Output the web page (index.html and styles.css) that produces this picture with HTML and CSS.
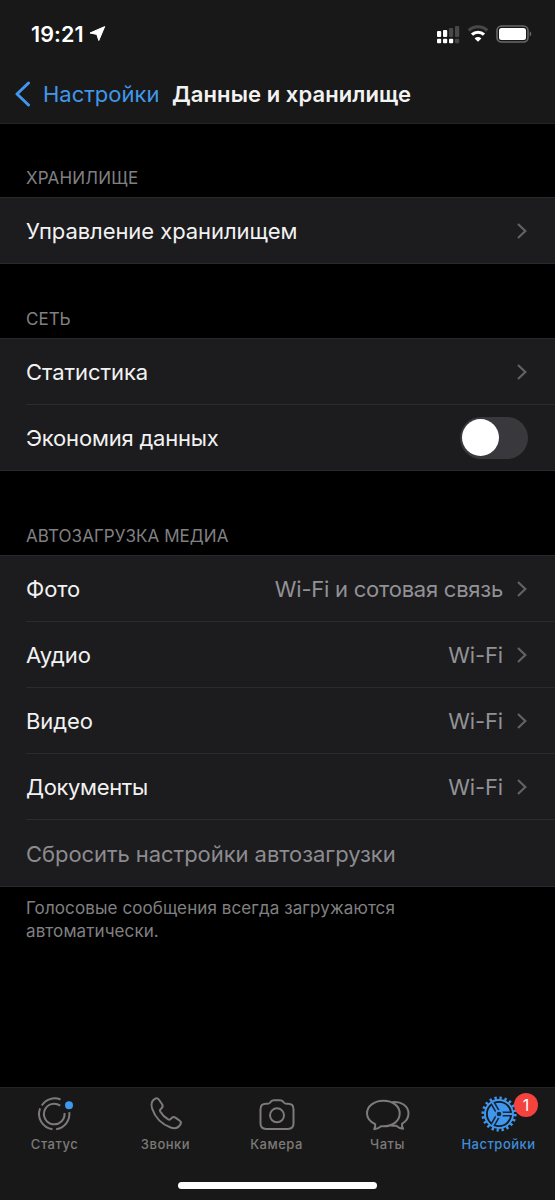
FILE: index.html
```html
<!DOCTYPE html>
<html lang="ru">
<head>
<meta charset="utf-8">
<title>Данные и хранилище</title>
<link rel="stylesheet" href="styles.css">
</head>
<body>
<div class="screen">
  <header class="header">
    <div class="status-bar">
      <div class="clock"><span class="time">19:21</span>
        <svg width="17" height="16" viewBox="0 0 17 16"><path d="M15.700.6 9.800 14.500 7.800 8.400 1 7Z" fill="#fff" stroke="#fff" stroke-width="1" stroke-linejoin="round"/></svg>
      </div>
      <div class="indicators">
        <svg width="24" height="20" viewBox="0 0 24 20">
          <g fill="#fff"><rect x="1" y="7" width="4.2" height="6" rx="1"/><rect x="7" y="6" width="4.2" height="7" rx="1"/><rect x="1" y="14.7" width="4.2" height="4.5" rx="1"/><rect x="7" y="14.7" width="4.2" height="4.5" rx="1"/><rect x="13" y="14.7" width="4.2" height="4.5" rx="1"/></g>
          <g fill="#48484a"><rect x="13" y="4" width="4.2" height="9" rx="1"/><rect x="19" y="2" width="4.2" height="11" rx="1"/><rect x="19" y="14.7" width="4.2" height="4.5" rx="1"/></g>
        </svg>
        <svg width="22" height="17" viewBox="0 0 22 17" fill="none" stroke-width="3.2">
          <path d="M1.800 5.500a13.200 13.200 0 0 1 18.400 0" stroke="#48484a"/>
          <path d="M5 9.700a8.600 8.600 0 0 1 12 0" stroke="#fff"/>
          <path d="M11 16.800 7.600 13.400a4.800 4.800 0 0 1 6.800 0Z" fill="#fff"/>
        </svg>
        <svg width="36" height="18" viewBox="0 0 36 18">
          <rect x="1" y="1" width="31" height="16" rx="4.5" fill="none" stroke="#68686a" stroke-width="1.6"/>
          <rect x="3" y="3" width="27" height="12" rx="2.5" fill="#fff"/>
          <path d="M33.7 6.6c2.1.5 2.1 4.3 0 4.8Z" fill="#68686a"/>
        </svg>
      </div>
    </div>
    <nav class="nav-bar">
      <svg class="back-icon" width="17" height="26" viewBox="0 0 17 26" fill="none" stroke="#3f97ee" stroke-width="3" stroke-linecap="round" stroke-linejoin="round"><path d="M14.500 2 3 13 14.500 24"/></svg>
      <a class="back">Настройки</a>
      <h1 class="title">Данные и хранилище</h1>
    </nav>
  </header>

  <main class="content">
    <h2 class="caption caption-storage">ХРАНИЛИЩЕ</h2>
    <section class="group group-single">
      <div class="row"><span class="label">Управление хранилищем</span><svg class="chevron" viewBox="0 0 12 18"><path d="m2 2 7.3 7L2 16"/></svg></div>
    </section>
    <h2 class="caption caption-network">СЕТЬ</h2>
    <section class="group">
      <div class="row"><span class="label">Статистика</span><svg class="chevron" viewBox="0 0 12 18"><path d="m2 2 7.3 7L2 16"/></svg></div>
      <div class="row row-switch"><span class="label label-economy">Экономия данных</span><span class="switch"><span class="knob"></span></span></div>
    </section>
    <h2 class="caption caption-media">АВТОЗАГРУЗКА МЕДИА</h2>
    <section class="group">
      <div class="row"><span class="label">Фото</span><span class="value value-long">Wi-Fi и сотовая связь</span><svg class="chevron" viewBox="0 0 12 18"><path d="m2 2 7.3 7L2 16"/></svg></div>
      <div class="row row-low"><span class="label">Аудио</span><span class="value">Wi-Fi</span><svg class="chevron" viewBox="0 0 12 18"><path d="m2 2 7.3 7L2 16"/></svg></div>
      <div class="row row-low"><span class="label">Видео</span><span class="value">Wi-Fi</span><svg class="chevron" viewBox="0 0 12 18"><path d="m2 2 7.3 7L2 16"/></svg></div>
      <div class="row row-low"><span class="label label-docs">Документы</span><span class="value">Wi-Fi</span><svg class="chevron" viewBox="0 0 12 18"><path d="m2 2 7.3 7L2 16"/></svg></div>
      <div class="row row-low"><span class="label reset">Сбросить настройки автозагрузки</span></div>
    </section>
    <p class="note">Голосовые сообщения всегда загружаются<br>автоматически.</p>
  </main>

  <footer class="footer">
    <div class="tabs">
      <div class="tab">
        <svg class="tab-icon" viewBox="0 0 44 40" fill="none" stroke="#7d7a79" stroke-width="2">
          <path d="M8.800 11.500A15.300 15.300 0 0 1 27.500 5.500"/>
          <path d="M7.100 14.400A15.300 15.300 0 0 0 19.500 35.200"/>
          <path d="M23.200 35.200A15.300 15.300 0 0 0 36.300 18.200"/>
          <path d="M27.200 11.600A10.300 10.300 0 1 0 31.500 19"/>
          <circle cx="36" cy="11.200" r="4" fill="#3f97ee" stroke="none"/>
        </svg>
        <span class="tab-label">Статус</span>
      </div>
      <div class="tab">
        <svg class="tab-icon" viewBox="0 0 44 40" fill="none" stroke="#7d7a79" stroke-width="2" stroke-linejoin="round">
          <path d="M10.8 4.9c1.6-1 3-.8 4 .6l3.3 4.8c1 1.5.7 2.7-.5 3.9l-1.1 1c-.8.8-.8 1.5-.3 2.4 1.8 3.1 4.900 6.100 8 7.800.9.5 1.600.5 2.300-.3l1.200-1.100c1.200-1.200 2.300-1.300 3.700-.4l4.400 3.200c1.300.9 1.500 2.100.6 3.700-2 3.400-5.500 4.400-9.700 3-9.400-3.500-15.800-10.800-18.500-18.800-1.400-4.100-.5-7.900 2.600-9.800Z"/>
        </svg>
        <span class="tab-label">Звонки</span>
      </div>
      <div class="tab">
        <svg class="tab-icon" viewBox="0 0 44 40" fill="none" stroke="#7d7a79" stroke-width="2" stroke-linejoin="round">
          <path d="M11 9.800h1.200c1.800 0 2.400-.5 3-1.300.8-1.600 1.700-2.200 3.600-2.200h6.400c1.900 0 2.800.6 3.600 2.200.6.800 1.200 1.300 3 1.300H33c3.700 0 5.500 1.800 5.500 5.400V29.500c0 3.600-1.800 5.400-5.500 5.400H11c-3.700 0-5.500-1.800-5.500-5.400V15.200c0-3.600 1.800-5.400 5.500-5.400Z"/>
          <circle cx="22" cy="21.300" r="7"/>
        </svg>
        <span class="tab-label">Камера</span>
      </div>
      <div class="tab">
        <svg class="tab-icon" viewBox="0 0 44 40" fill="none" stroke="#7d7a79" stroke-width="2" stroke-linejoin="round">
          <path d="M17.500 6.700C27 6.700 33.700 12.200 33.700 19.500S27 32.300 17.500 32.300c-1 0-1.700 0-2.500-.1-1.800 1.600-4 2.800-6.800 3 .9-1.500 1.300-3 1-5C4.300 27.800 1 24.300 1 19.500 1 12.200 8 6.700 17.500 6.700Z"/>
          <path d="M26 8.200C35 6.700 42.500 12.200 42.500 19.500c0 4.500-2.500 8-6.500 10.400-.2 2 .2 3.500 1.100 4.800-2.900-.3-5.100-1.400-6.900-3-1.700.2-3.200.2-5-.2"/>
        </svg>
        <span class="tab-label">Чаты</span>
      </div>
      <div class="tab tab-active">
        <svg class="tab-icon" viewBox="0 0 44 40">
          <circle cx="22" cy="20" r="16" fill="none" stroke="#3f97ee" stroke-width="3.200" stroke-dasharray="2.300 2.726"/>
          <circle cx="22" cy="20" r="14" fill="none" stroke="#3f97ee" stroke-width="2"/>
          <circle cx="22" cy="20" r="11.200" fill="#3f97ee"/>
          <g stroke="#17263a" stroke-width="5"><path d="M22 20h12.700M22 20 15.650 9M22 20 15.650 31"/></g>
          <g stroke="#3f97ee" stroke-width="1.800"><path d="M22 20h13.500M22 20 15.250 8.310M22 20 15.250 31.690"/></g>
          <circle cx="22" cy="20" r="3.200" fill="#17263a" stroke="#3f97ee" stroke-width="1.700"/>
        </svg>
        <span class="badge">1</span>
        <span class="tab-label">Настройки</span>
      </div>
    </div>
    <div class="home-indicator"></div>
  </footer>
</div>
</body>
</html>
```
FILE: styles.css
```css
* { box-sizing: border-box; }
body { margin: 0; background: #000; color: #f2f2f3; font-family: Inter, "Liberation Sans", sans-serif; }
svg { display: block; flex: none; }
.screen { width: 555px; height: 1200px; display: flex; flex-direction: column; background: #000; overflow: hidden; white-space: nowrap; }
.header { height: 124px; background: #181818; border-bottom: 1px solid #242424; }
.status-bar { height: 67px; padding: 0 23px 0 31px; display: flex; align-items: center; justify-content: space-between; }
.clock { display: flex; align-items: center; gap: 5px; }
.time { font-size: 21.5px; font-weight: 600; line-height: 24px; letter-spacing: .1px; color: #fff; }
.indicators { display: flex; align-items: center; gap: 7px; }
.nav-bar { height: 54px; padding-left: 14px; display: flex; align-items: center; }
.back-icon { margin-right: 12px; }
.back { width: 129px; font-size: 22px; color: #4197e9; }
.title { margin: 0; font-size: 22px; font-weight: 600; letter-spacing: .08px; }
.content { flex: 1; }
.caption { margin: 0; padding-left: 26px; font-size: 17px; font-weight: 400; line-height: 20px; color: #808083; }
.caption-storage { height: 73px; padding-top: 44px; letter-spacing: .2px; }
.caption-network { height: 74px; padding-top: 45px; }
.caption-media { height: 84px; padding-top: 55px; letter-spacing: .06px; }
.group { background: #1c1c1e; border-top: 1px solid #29292b; border-bottom: 1px solid #29292b; }
.row { height: 66px; margin-left: 26px; padding-right: 27px; display: flex; align-items: center; border-bottom: 1px solid #2b2b2d; }
.row:last-child { border-bottom: 0; }
.group-single .row, .row-switch { height: 65px; }
.row-low { padding-top: 1px; }
.label { flex: 1; font-size: 22px; letter-spacing: -.06px; }
.label-economy { letter-spacing: -.2px; }
.label-docs { letter-spacing: -.35px; }
.value { font-size: 22px; letter-spacing: -.15px; color: #929296; }
.value-long { letter-spacing: -.24px; }
.chevron { width: 12px; height: 18px; margin-left: 13px; fill: none; stroke: #626266; stroke-width: 2.2; }
.reset { color: #8c8c90; }
.switch { width: 68px; height: 42px; padding: 2px; border-radius: 21px; background: #39393d; }
.knob { display: block; width: 37px; height: 37px; border-radius: 50%; background: #fff; }
.note { margin: 10px 26px 0; font-size: 17px; line-height: 23px; letter-spacing: .1px; color: #808083; }
.footer { height: 113px; background: #181818; border-top: 1px solid #242424; }
.tabs { height: 94px; display: grid; grid-template-columns: repeat(5, 111px); margin-left: -1px; }
.tab { position: relative; padding-top: 6px; display: flex; flex-direction: column; align-items: center; color: #7d7a79; }
.tab-icon { width: 44px; height: 40px; }
.tab-label { margin-top: 1px; font-size: 13px; font-weight: 500; line-height: 18px; letter-spacing: .5px; }
.tab-active { color: #3f8ddb; }
.badge { position: absolute; left: 71px; top: 5px; width: 24px; height: 24px; border-radius: 50%; background: #f4433e; color: #fff; font-size: 16px; line-height: 24px; text-align: center; }
.home-indicator { width: 199px; height: 7px; margin: 0 auto; border-radius: 4px; background: #fff; }
```
